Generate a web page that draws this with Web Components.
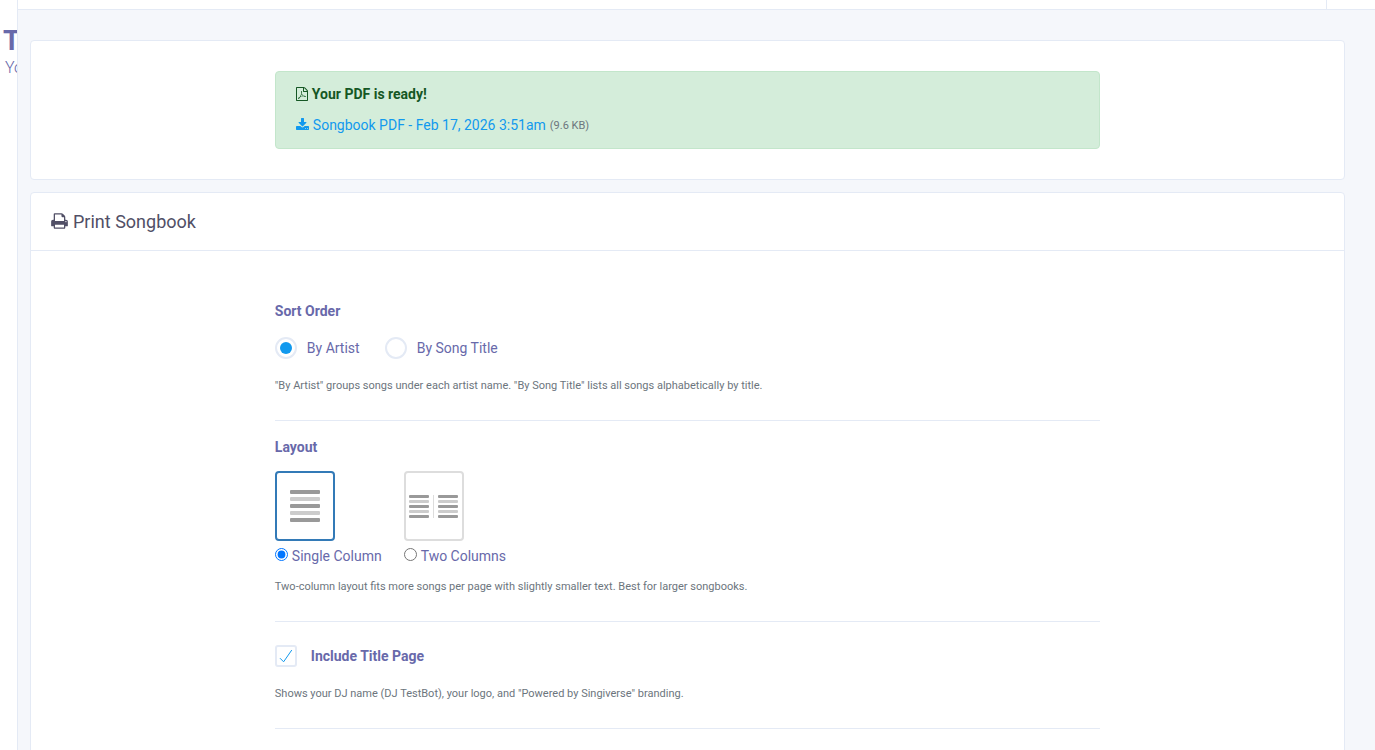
<!DOCTYPE html>
<html lang="en">
<head>
<meta charset="utf-8">
<meta name="viewport" content="width=device-width, initial-scale=1">
<title>Print Songbook</title>
<style>
  html, body { margin: 0; }
  body {
    --line: #e4eaf5;
    --ink: #6869aa;
    --accent: #1199ee;
    font: 14px/21px Roboto, "Liberation Sans", sans-serif;
    color: var(--ink);
    background: #f5f7fb;
  }
</style>
</head>
<body>
<app-shell>
  <side-peek slot="side"></side-peek>
  <top-bar></top-bar>
  <panel-card>
    <pdf-notice></pdf-notice>
  </panel-card>
  <panel-card>
    <app-icon slot="title" name="print" style="--w:17px;--h:18px"></app-icon>
    <span slot="title">Print Songbook</span>
    <songbook-form></songbook-form>
  </panel-card>
</app-shell>

<script>
const define = (name, html, setup) => {
  const template = document.createElement('template');
  template.innerHTML = html;
  customElements.define(name, class extends HTMLElement {
    constructor() {
      super();
      this.attachShadow({ mode: 'open' }).append(template.content.cloneNode(true));
    }
    connectedCallback() { if (setup) setup(this, this.shadowRoot); }
  });
};

const ICONS = {
  pdf: ['128 0 1536 1792', 'M1596 380q28 28 48 76t20 88v1152q0 40-28 68t-68 28h-1344q-40 0-68-28t-28-68v-1600q0-40 28-68t68-28h896q40 0 88 20t76 48zm-444-244v376h376q-10-29-22-41l-313-313q-12-12-41-22zm384 1528v-1024h-416q-40 0-68-28t-28-68v-416h-768v1536h1280zm-514-593q33 26 84 56 59-7 117-7 147 0 177 49 16 22 2 52 0 1-1 2l-2 2v1q-6 38-71 38-48 0-115-20t-130-53q-221 24-392 83-153 262-242 262-15 0-28-7l-24-12q-1-1-6-5-10-10-6-36 9-40 56-91.500t132-96.500q14-9 23 6 2 2 2 4 52-85 107-197 68-136 104-262-24-82-30.500-159.500t6.500-127.500q11-40 42-40h22q23 0 35 15 18 21 9 68-2 6-4 8 1 3 1 8v30q-2 123-14 192 55 164 146 238zm-576 411q52-24 137-158-51 40-87.500 84t-49.500 74zm398-920q-15 42-2 132 1-7 7-44 0-3 7-43 1-4 4-8-1-1-1-2t-1-2q-1-22-13-36 0 1-1 2v2zm-124 661q135-54 284-81-2-1-13-9.500t-16-13.500q-76-67-127-176-27 86-83 197-30 56-45 83zm646-16q-24-24-140-24 76 28 124 28 14 0 18-1 0-1-2-3z'],
  download: ['64 0 1664 1792', 'M1344 1344q0-26-19-45t-45-19-45 19-19 45 19 45 45 19 45-19 19-45zm256 0q0-26-19-45t-45-19-45 19-19 45 19 45 45 19 45-19 19-45zm128-224v320q0 40-28 68t-68 28h-1472q-40 0-68-28t-28-68v-320q0-40 28-68t68-28h465l135 136q58 56 136 56t136-56l136-136h464q40 0 68 28t28 68zm-325-569q17 41-14 70l-448 448q-18 19-45 19t-45-19l-448-448q-31-29-14-70 17-39 59-39h256v-448q0-26 19-45t45-19h256q26 0 45 19t19 45v448h256q42 0 59 39z'],
  print: ['64 0 1664 1792', 'M448 1536h896v-256h-896v256zm0-640h896v-384h-160q-40 0-68-28t-28-68v-160h-640v640zm1152 64q0-26-19-45t-45-19-45 19-19 45 19 45 45 19 45-19 19-45zm128 0v416q0 13-9.5 22.5t-22.5 9.5h-224v160q0 40-28 68t-68 28h-960q-40 0-68-28t-28-68v-160h-224q-13 0-22.5-9.5t-9.5-22.5v-416q0-79 56.5-135.5t135.5-56.5h64v-544q0-40 28-68t68-28h672q40 0 88 20t76 48l152 152q28 28 48 76t20 88v256h64q79 0 135.500 56.500t56.500 135.500z'],
};

define('app-icon', `
  <style>
    :host { display: inline-flex; flex: none; padding-bottom: 1px; }
    svg { display: block; width: var(--w, 14px); height: var(--h, 14px); fill: currentColor; }
  </style>
  <svg aria-hidden="true"><path/></svg>`,
  (host, root) => {
    const [box, d] = ICONS[host.getAttribute('name')];
    root.querySelector('svg').setAttribute('viewBox', box);
    root.querySelector('path').setAttribute('d', d);
  });

define('app-shell', `
  <style>
    :host { display: grid; grid-template-columns: 18px minmax(0, 1fr); min-height: 100vh; }
    main { display: flex; flex-direction: column; gap: 12px; padding: 0 30px 30px 12px; }
    ::slotted(top-bar) { margin: 0 -30px 18px -12px; }
  </style>
  <slot name="side"></slot>
  <main><slot></slot></main>`);

define('side-peek', `
  <style>
    :host { display: block; overflow: hidden; background: #fff; border-right: 1px solid var(--line); padding: 25px 0 0 3px; }
    h2, p { margin: 0; white-space: nowrap; }
    h2 { font-size: 28px; line-height: 32px; font-weight: 700; }
    p { font-size: 16px; line-height: 22px; font-weight: 300; padding-left: 2px; }
  </style>
  <h2>T</h2>
  <p>Yo</p>`);

define('top-bar', `
  <style>
    :host { display: flex; justify-content: flex-end; height: 9px; background: #fff; border-bottom: 1px solid var(--line); }
    div { width: 48px; border-left: 1px solid var(--line); }
  </style>
  <div></div>`);

define('panel-card', `
  <style>
    :host { display: block; background: #fff; border: 1px solid var(--line); border-radius: 4px; }
    header { display: flex; align-items: center; padding: 15px 20px; border-bottom: 1px solid var(--line); }
    header[hidden] { display: none; }
    h1 { display: flex; align-items: center; gap: 5px; margin: 0; font-size: 18px; line-height: 27px; font-weight: 400; color: #514f66; }
    .body { display: grid; grid-template-columns: repeat(12, minmax(0, 1fr)); column-gap: 30px; padding: 30px; }
    .body.roomy { padding-top: 50px; }
    .body > slot::slotted(*) { grid-column: 3 / span 8; }
  </style>
  <header><h1><slot name="title"></slot></h1></header>
  <div class="body"><slot></slot></div>`,
  (host, root) => {
    const titled = !!host.querySelector('[slot=title]');
    root.querySelector('header').hidden = !titled;
    root.querySelector('.body').classList.toggle('roomy', titled);
  });

define('pdf-notice', `
  <style>
    :host { display: block; padding: 12px 20px; background: #d4edda; border: 1px solid #c3e6cb; border-radius: 4px; color: #155724; }
    strong, a, p { display: flex; align-items: center; gap: 4px; }
    p { margin: 10px 0 0; }
    a { color: var(--accent); text-decoration: none; }
    small { font-size: 11px; color: #6c757d; }
  </style>
  <strong><app-icon name="pdf" style="--w:12px"></app-icon>Your PDF is ready!</strong>
  <p><a href="#songbook"><app-icon name="download" style="--w:13px"></app-icon>Songbook PDF - Feb 17, 2026 3:51am</a><small>(9.6 KB)</small></p>`);

const FIELD = `
    :host { display: block; }
    fieldset { border: 0; margin: 0; padding: 0; min-width: 0; }
    legend { padding: 0; font-weight: 700; }
    .help { margin: 0; font-size: 11px; line-height: 17px; color: #6c757d; }
    input { margin: 0; flex: none; }
    label { display: flex; }
    .row { display: flex; }`;

define('sort-order', `
  <style>${FIELD}
    .row { gap: 25px; margin: 15px 0 18px; }
    label { align-items: center; gap: 10px; line-height: 22px; }
    input { appearance: none; box-sizing: border-box; width: 22px; height: 22px; border: 2px solid var(--line); border-radius: 50%; background: #fff; display: grid; place-items: center; }
    input:checked::before { content: ""; width: 12px; height: 12px; border-radius: 50%; background: var(--accent); }
  </style>
  <fieldset>
    <legend>Sort Order</legend>
    <div class="row">
      <label><input type="radio" name="sort" checked>By Artist</label>
      <label><input type="radio" name="sort">By Song Title</label>
    </div>
  </fieldset>
  <p class="help">"By Artist" groups songs under each artist name. "By Song Title" lists all songs alphabetically by title.</p>`);

define('text-lines', `
  <style>
    :host { display: flex; flex-direction: column; gap: var(--gap, 3px); width: var(--width, 30px); }
    i { height: var(--bar, 4px); border-radius: 1px; background: #999; }
    i:nth-of-type(even) { background: #ccc; }
  </style>
  <i></i><i></i><i></i><i></i><i></i>`);

define('page-layout', `
  <style>${FIELD}
    .row { gap: 22px; margin: 13px 0 11px; }
    label { flex-direction: column; gap: 5px; }
    .sheet { box-sizing: border-box; width: 60px; height: 70px; border: 2px solid #ddd; border-radius: 4px; display: flex; align-items: center; justify-content: center; gap: 4px; }
    label:has(:checked) .sheet { border-color: #337ab7; }
    .two { --width: 20px; --bar: 3px; --gap: 2px; }
    .rule { width: 1px; height: 23px; background: #ddd; }
    .choice { display: flex; gap: 4px; }
    input { width: 13px; height: 13px; margin-top: 2px; }
  </style>
  <fieldset>
    <legend>Layout</legend>
    <div class="row">
      <label>
        <span class="sheet"><text-lines></text-lines></span>
        <span class="choice"><input type="radio" name="layout" checked>Single Column</span>
      </label>
      <label>
        <span class="sheet two"><text-lines></text-lines><span class="rule"></span><text-lines></text-lines></span>
        <span class="choice"><input type="radio" name="layout">Two Columns</span>
      </label>
    </div>
  </fieldset>
  <p class="help">Two-column layout fits more songs per page with slightly smaller text. Best for larger songbooks.</p>`);

define('title-page', `
  <style>${FIELD}
    :host { padding-top: 7px; }
    label { align-items: center; gap: 14px; font-weight: 700; line-height: 22px; margin-bottom: 18px; }
    .tick { display: grid; }
    .tick > * { grid-area: 1 / 1; }
    input { appearance: none; box-sizing: border-box; width: 22px; height: 22px; border: 2px solid var(--line); border-radius: 3px; background: #fff; }
    svg { width: 22px; height: 22px; fill: none; stroke: var(--accent); pointer-events: none; }
    input:not(:checked) + svg { visibility: hidden; }
  </style>
  <label><span class="tick"><input type="checkbox" checked><svg viewBox="0 0 22 22" aria-hidden="true"><path d="M5 13.200L8.600 16.800L16.800 5"/></svg></span>Include Title Page</label>
  <p class="help">Shows your DJ name (DJ TestBot), your logo, and "Powered by Singiverse" branding.</p>`);

define('songbook-form', `
  <style>
    :host { display: block; }
    hr { border: 0; height: 1px; margin: 26px 0 16px; background: var(--line); }
  </style>
  <form>
    <sort-order></sort-order>
    <hr>
    <page-layout></page-layout>
    <hr>
    <title-page></title-page>
    <hr>
  </form>`);
</script>
</body>
</html>
